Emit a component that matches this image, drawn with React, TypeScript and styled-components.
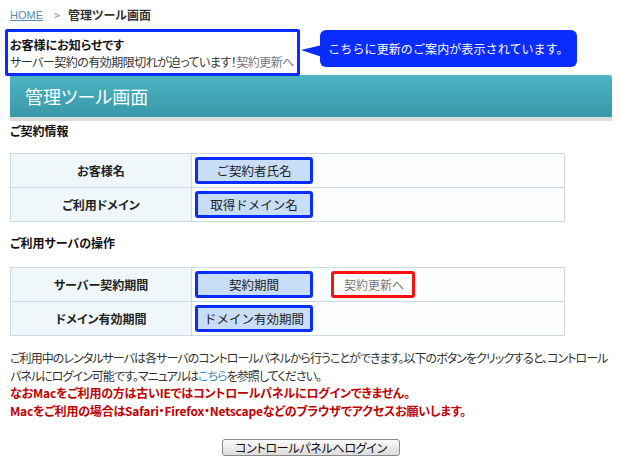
import React from 'react'
import styled, { createGlobalStyle } from 'styled-components'

const GlobalStyle = createGlobalStyle`
  html, body {
    margin: 0;
    padding: 0;
    background: #fff;
  }
  body {
    font-family: "Noto Sans CJK JP", "Liberation Sans", sans-serif;
    font-size: 12px;
    color: #222;
    font-feature-settings: "palt";
  }
`

const Page = styled.div`
  width: 620px;
  height: 468px;
  overflow: hidden;
  padding-top: 7px;
  box-sizing: border-box;
`

const Breadcrumb = styled.div`
  display: flex;
  align-items: center;
  height: 16px;
  padding-left: 10px;
  line-height: 16px;
`

const HomeLink = styled.a`
  color: #4f8cab;
  text-decoration: underline;
  font-family: "Liberation Sans", sans-serif;
  font-size: 11px;
`

const Crumb = styled.span`
  color: #888;
  margin: 0 8px 0 11px;
  font-size: 11px;
`

const Current = styled.span`
  font-weight: bold;
  color: #333;
`

const NoticeRow = styled.div`
  position: relative;
  margin-top: 6px;
`

const NoticeBox = styled.div`
  margin-left: 5px;
  width: 295px;
  box-sizing: border-box;
  border: 3px solid #0a2dff;
  border-radius: 2px;
  padding: 4px 0 3px 2px;
  line-height: 17px;
`

const NoticeTitle = styled.div`
  font-weight: bold;
  color: #111;
`

const NoticeText = styled.div`
  color: #333;
  white-space: nowrap;
  letter-spacing: -0.5px;
`

const GrayLink = styled.span`
  color: #777;
`

const Callout = styled.div`
  position: absolute;
  left: 320px;
  top: 1px;
  width: 257px;
  height: 37px;
  box-sizing: border-box;
  background: #0a2dff;
  border-radius: 6px;
  color: #fff;
  display: flex;
  align-items: center;
  justify-content: center;
  font-feature-settings: normal;
  letter-spacing: 0.1px;
  svg {
    position: absolute;
    left: -19px;
    top: 15px;
  }
`

const Banner = styled.div`
  margin: -1px 8px 0 10px;
  height: 42px;
  background: linear-gradient(#4cb4c3, #3a98a8);
  border-radius: 0 3px 0 0;
  border-bottom: 4px solid #dcdcdc;
  color: #fff;
  font-size: 18px;
  display: flex;
  align-items: center;
  padding-left: 15px;
`

const SectionTitle = styled.div<{ top: number }>`
  font-weight: bold;
  padding-left: 10px;
  margin-top: ${(p) => p.top}px;
  line-height: 16px;
  color: #111;
`

const Table = styled.div<{ top: number }>`
  margin: ${(p) => p.top}px 0 0 10px;
  width: 555px;
  border: 1px solid #cfdadf;
  box-sizing: border-box;
`

const Row = styled.div`
  display: grid;
  grid-template-columns: 181px 1fr;
  height: 33px;
  & + & {
    border-top: 1px solid #cfdadf;
  }
`

const Label = styled.div`
  background: #eff7fa;
  border-right: 1px solid #cfdadf;
  font-weight: bold;
  display: flex;
  align-items: center;
  justify-content: center;
  color: #222;
`

const Value = styled.div`
  background: #fcfdfe;
  display: flex;
  align-items: center;
  padding-left: 3px;
  gap: 18px;
`

const FieldBox = styled.div`
  width: 118px;
  height: 27px;
  box-sizing: border-box;
  border: 3px solid #0a2dff;
  border-radius: 3px;
  background: #c7ddf8;
  display: flex;
  align-items: center;
  justify-content: center;
  color: #222;
  font-size: 12.5px;
  font-feature-settings: normal;
`

const RenewBox = styled.div`
  width: 84px;
  height: 27px;
  box-sizing: border-box;
  border: 3px solid #ff1010;
  border-radius: 3px;
  background: #fff;
  display: flex;
  align-items: center;
  padding-left: 10px;
  color: #777;
`

const Paragraph = styled.div`
  margin-top: 13px;
  padding-left: 10px;
  line-height: 17.5px;
  white-space: nowrap;
  color: #333;
`

const Line = styled.div`
  letter-spacing: -0.95px;
`

const Warn = styled.div`
  color: #c00000;
  font-weight: bold;
  letter-spacing: -0.2px;
`

const BlueLink = styled.span`
  color: #3a8cc0;
`

const ButtonRow = styled.div`
  display: flex;
  justify-content: center;
  margin-top: 20px;
  padding-left: 2px;
`

const LoginButton = styled.button`
  width: 178px;
  height: 17px;
  padding: 0;
  border: 1px solid #8a8a8a;
  border-radius: 3px;
  background: linear-gradient(#fafafa, #dcdcdc);
  font-family: "Noto Sans CJK JP", sans-serif;
  font-size: 12px;
  line-height: 15px;
  color: #111;
  font-feature-settings: "palt";
  letter-spacing: -0.3px;
`

const fields = [
  { label: 'お客様名', value: 'ご契約者氏名' },
  { label: 'ご利用ドメイン', value: '取得ドメイン名' },
]

export default function App() {
  return (
    <Page>
      <GlobalStyle />
      <Breadcrumb>
        <HomeLink>HOME</HomeLink>
        <Crumb>&gt;</Crumb>
        <Current>管理ツール画面</Current>
      </Breadcrumb>

      <NoticeRow>
        <NoticeBox>
          <NoticeTitle>お客様にお知らせです</NoticeTitle>
          <NoticeText>
            サーバー契約の有効期限切れが迫っています！<GrayLink>契約更新へ</GrayLink>
          </NoticeText>
        </NoticeBox>
        <Callout>
          <svg width="21" height="12" viewBox="0 0 21 12">
            <polygon points="0,5 21,0 21,12" fill="#0a2dff" />
          </svg>
          こちらに更新のご案内が表示されています。
        </Callout>
      </NoticeRow>

      <Banner>管理ツール画面</Banner>

      <SectionTitle top={2}>ご契約情報</SectionTitle>
      <Table top={14}>
        {fields.map((f) => (
          <Row key={f.label}>
            <Label>{f.label}</Label>
            <Value>
              <FieldBox>{f.value}</FieldBox>
            </Value>
          </Row>
        ))}
      </Table>

      <SectionTitle top={13}>ご利用サーバの操作</SectionTitle>
      <Table top={16}>
        <Row>
          <Label>サーバー契約期間</Label>
          <Value>
            <FieldBox>契約期間</FieldBox>
            <RenewBox>契約更新へ</RenewBox>
          </Value>
        </Row>
        <Row>
          <Label>ドメイン有効期間</Label>
          <Value>
            <FieldBox>ドメイン有効期間</FieldBox>
          </Value>
        </Row>
      </Table>

      <Paragraph>
        <Line>
          ご利用中のレンタルサーバは各サーバのコントロールパネルから行うことができます。以下のボタンをクリックすると、コントロール
        </Line>
        <Line>
          パネルにログイン可能です。マニュアルは<BlueLink>こちら</BlueLink>を参照してください。
        </Line>
        <Warn>なおMacをご利用の方は古いIEではコントロールパネルにログインできません。</Warn>
        <Warn>Macをご利用の場合はSafari・Firefox・Netscapeなどのブラウザでアクセスお願いします。</Warn>
      </Paragraph>

      <ButtonRow>
        <LoginButton>コントロールパネルへログイン</LoginButton>
      </ButtonRow>
    </Page>
  )
}
